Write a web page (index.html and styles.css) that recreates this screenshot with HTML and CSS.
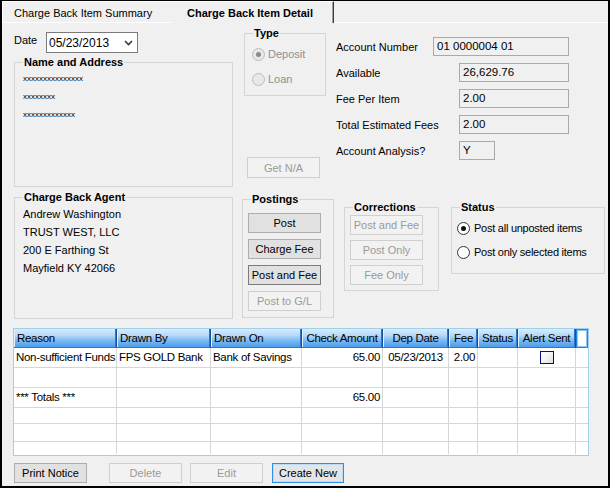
FILE: index.html
```html
<!DOCTYPE html>
<html>
<head>
<meta charset="utf-8">
<link rel="stylesheet" href="styles.css">
</head>
<body>
<div class="window">
  <div class="tabs">
    <div class="tab">Charge Back Item Summary</div>
    <div class="tab active">Charge Back Item Detail</div>
    <div class="tab-fill"></div>
  </div>
  <div class="content">
    <div class="row-top">
      <div class="col-a">
        <div class="date-row">
          <span class="date-lbl">Date</span>
          <div class="combo">
            <span>05/23/2013</span>
            <svg class="chev" width="9" height="6" viewBox="0 0 9 6"><polyline points="1,1 4.5,4.5 8,1" fill="none" stroke="#3a3a3a" stroke-width="1.6"/></svg>
          </div>
        </div>
        <div class="group name-group">
          <span class="group-title">Name and Address</span>
          <div class="masked">xxxxxxxxxxxxxxx</div>
          <div class="masked">xxxxxxxx</div>
          <div class="masked">xxxxxxxxxxxxx</div>
        </div>
      </div>
      <div class="col-b">
        <div class="group type-group">
          <span class="group-title">Type</span>
          <div class="radio-row dis"><span class="radio dis on"></span>Deposit</div>
          <div class="radio-row dis"><span class="radio dis"></span>Loan</div>
        </div>
        <div class="btn disabled getna">Get N/A</div>
      </div>
      <div class="col-c">
        <div class="frow"><span class="lbl short">Account Number</span><div class="field wide">01 0000004 01</div></div>
        <div class="frow"><span class="lbl">Available</span><div class="field">26,629.76</div></div>
        <div class="frow"><span class="lbl">Fee Per Item</span><div class="field">2.00</div></div>
        <div class="frow"><span class="lbl">Total Estimated Fees</span><div class="field">2.00</div></div>
        <div class="frow"><span class="lbl">Account Analysis?</span><div class="field tiny">Y</div></div>
      </div>
    </div>

    <div class="row-mid">
      <div class="group agent-group">
        <span class="group-title">Charge Back Agent</span>
        <div class="aline">Andrew Washington</div>
        <div class="aline">TRUST WEST, LLC</div>
        <div class="aline">200 E Farthing St</div>
        <div class="aline">Mayfield KY 42066</div>
      </div>
      <div class="group postings-group">
        <span class="group-title">Postings</span>
        <div class="btn">Post</div>
        <div class="btn">Charge Fee</div>
        <div class="btn dark">Post and Fee</div>
        <div class="btn disabled">Post to G/L</div>
      </div>
      <div class="group corrections-group">
        <span class="group-title">Corrections</span>
        <div class="btn disabled">Post and Fee</div>
        <div class="btn disabled">Post Only</div>
        <div class="btn disabled">Fee Only</div>
      </div>
      <div class="group status-group">
        <span class="group-title">Status</span>
        <div class="radio-row"><span class="radio on"></span>Post all unposted items</div>
        <div class="radio-row"><span class="radio"></span>Post only selected items</div>
      </div>
    </div>

    <div class="grid">
      <div class="hc">Reason</div>
      <div class="hc">Drawn By</div>
      <div class="hc">Drawn On</div>
      <div class="hc c">Check Amount</div>
      <div class="hc c">Dep Date</div>
      <div class="hc r">Fee</div>
      <div class="hc c">Status</div>
      <div class="hc c">Alert Sent</div>
      <div class="hc blank"></div>

      <div class="cell">Non-sufficient Funds</div>
      <div class="cell">FPS GOLD Bank</div>
      <div class="cell">Bank of Savings</div>
      <div class="cell r">65.00</div>
      <div class="cell c">05/23/2013</div>
      <div class="cell r">2.00</div>
      <div class="cell"></div>
      <div class="cell c"><span class="check"></span></div>
      <div class="cell last"></div>

      <div class="cell"></div><div class="cell"></div><div class="cell"></div><div class="cell"></div><div class="cell"></div><div class="cell"></div><div class="cell"></div><div class="cell"></div><div class="cell last"></div>

      <div class="cell">*** Totals ***</div>
      <div class="cell"></div>
      <div class="cell"></div>
      <div class="cell r">65.00</div>
      <div class="cell"></div><div class="cell"></div><div class="cell"></div><div class="cell"></div><div class="cell last"></div>

      <div class="cell"></div><div class="cell"></div><div class="cell"></div><div class="cell"></div><div class="cell"></div><div class="cell"></div><div class="cell"></div><div class="cell"></div><div class="cell last"></div>

      <div class="cell"></div><div class="cell"></div><div class="cell"></div><div class="cell"></div><div class="cell"></div><div class="cell"></div><div class="cell"></div><div class="cell"></div><div class="cell last"></div>

      <div class="cell end"></div><div class="cell end"></div><div class="cell end"></div><div class="cell end"></div><div class="cell end"></div><div class="cell end"></div><div class="cell end"></div><div class="cell end"></div><div class="cell end last"></div>
    </div>

    <div class="actions">
      <div class="btn">Print Notice</div>
      <div class="btn disabled gap-l">Delete</div>
      <div class="btn disabled">Edit</div>
      <div class="btn focus">Create New</div>
    </div>
  </div>
</div>
</body>
</html>
```

FILE: styles.css
```css
* { box-sizing: border-box; }

body {
  margin: 0;
  background: #f0f0f0;
  font-family: "Liberation Sans", Arial, sans-serif;
  font-size: 11px;
  color: #000;
}

.window {
  width: 610px;
  height: 488px;
  border: 2px solid #000;
  border-top: 1px solid #000;
  background: #f0f0f0;
  overflow: hidden;
}

/* tabs */
.tabs {
  display: flex;
  height: 22px;
}
.tab {
  width: 170px;
  height: 22px;
  padding: 2px 0 0 11px;
  line-height: 18px;
  border-top: 1px solid #fff;
  border-left: 1px solid #fff;
  border-bottom: 1px solid #fff;
  white-space: nowrap;
}
.tab.active {
  width: 162px;
  padding-left: 15px;
  font-weight: bold;
  border-bottom: none;
  border-left: none;
  border-right: 1px solid #3c3c3c;
  box-shadow: inset -1px 0 #a0a0a0;
}
.tab-fill {
  flex: 1;
  border-bottom: 1px solid #fff;
}

.content {
  padding-left: 12px;
}

/* top row */
.row-top {
  display: flex;
  align-items: flex-start;
}
.col-a {
  width: 219px;
  margin-top: 9px;
}
.date-row {
  display: flex;
  align-items: flex-start;
  height: 21px;
}
.date-lbl {
  width: 32px;
  margin-top: 2px;
  line-height: 13px;
}
.combo {
  width: 92px;
  height: 21px;
  border: 1px solid #7a7a7a;
  background: #fff;
  display: flex;
  align-items: center;
  justify-content: space-between;
  padding: 0 4px 0 2px;
  font-size: 12px;
}
.chev { display: block; }

.group {
  position: relative;
  border: 1px solid #d5d5d5;
}
.group-title {
  position: absolute;
  top: -7px;
  left: 8px;
  padding: 0 1px;
  background: #f0f0f0;
  font-weight: bold;
  line-height: 13px;
  white-space: nowrap;
}

.name-group {
  margin-top: 9px;
  height: 125px;
  padding: 7px 0 0 8px;
}
.masked {
  font-size: 8px;
  line-height: 18px;
  height: 18px;
}

.col-b {
  width: 82px;
  margin: 10px 0 0 11px;
}
.type-group {
  height: 63px;
  padding: 14px 0 0 7px;
  display: flex;
  flex-direction: column;
  gap: 12px;
}
.radio-row {
  display: flex;
  align-items: center;
  gap: 3px;
  height: 13px;
  line-height: 13px;
  white-space: nowrap;
}
.radio-row.dis { color: #8f8f8f; }
.radio {
  width: 13px;
  height: 13px;
  flex: none;
  border-radius: 50%;
  border: 1px solid #333;
  background: #fff;
  display: flex;
  align-items: center;
  justify-content: center;
}
.radio.on::after {
  content: "";
  width: 5px;
  height: 5px;
  border-radius: 50%;
  background: #111;
}
.radio.dis {
  border-color: #bcbcbc;
  background: #e8e8e8;
}
.radio.dis.on::after { background: #8a8a8a; }

.btn {
  width: 73px;
  height: 20px;
  border: 1px solid #adadad;
  background: #e1e1e1;
  display: flex;
  align-items: center;
  justify-content: center;
  white-space: nowrap;
}
.btn.dark { border-color: #7c7c7c; }
.btn.disabled {
  border-color: #cfcfcf;
  background: #f2f2f2;
  color: #9a9a9a;
}
.btn.focus {
  border: 1px solid #2e8eea;
  box-shadow: inset 0 0 0 1px #bcdcf8;
  background: #e5e5e5;
  width: 72px;
}
.getna {
  margin: 61px 0 0 3px;
  height: 21px;
}

.col-c {
  margin: 14px 0 0 10px;
  display: flex;
  flex-direction: column;
  gap: 7px;
}
.frow {
  display: flex;
  align-items: center;
  height: 19px;
}
.lbl {
  width: 123px;
  white-space: nowrap;
}
.lbl.short { width: 97px; }
.field {
  width: 110px;
  height: 19px;
  border: 1px solid #a9a9a9;
  background: #f0f0f0;
  padding-left: 3px;
  line-height: 17px;
  font-size: 11.5px;
}
.field.wide { width: 136px; }
.field.tiny { width: 36px; }

/* middle row */
.row-mid {
  display: flex;
  align-items: flex-start;
  margin-top: 10px;
}
.agent-group {
  width: 219px;
  height: 122px;
  padding: 7px 0 0 8px;
}
.aline {
  line-height: 18px;
  height: 18px;
  white-space: nowrap;
}
.postings-group {
  width: 92px;
  height: 119px;
  margin: 2px 0 0 9px;
  padding: 13px 0 0 5px;
  display: flex;
  flex-direction: column;
  gap: 6px;
}
.corrections-group {
  width: 95px;
  height: 84px;
  margin: 10px 0 0 10px;
  padding: 7px 0 0 5px;
  display: flex;
  flex-direction: column;
  gap: 5px;
}
.status-group {
  width: 154px;
  height: 67px;
  margin: 10px 0 0 12px;
  padding: 14px 0 0 5px;
  display: flex;
  flex-direction: column;
  gap: 11px;
}
.status-group .radio-row { gap: 4px; letter-spacing: -0.25px; }

/* data grid */
.grid {
  margin: 9px 0 0 -1px;
  width: 576px;
  height: 128px;
  border: 1px solid #9fd0e8;
  background: #fff;
  display: grid;
  grid-template-columns: 103px 94px 91px 81px 66px 29px 40px 58px 12px;
  grid-template-rows: 19px 20px 20px 20px 16px 18px 12px;
  font-size: 11.5px;
  letter-spacing: -0.3px;
  overflow: hidden;
}
.hc {
  background: linear-gradient(to bottom, #d9ecfd 0%, #b6d9f9 35%, #7ab9f2 65%, #4a9cec 100%);
  border-right: 1px solid #14509e;
  box-shadow: inset -1px 0 #2a77d0, inset 1px 0 #e2f0fe;
  border-bottom: 1px solid #2a77d0;
  padding: 0 3px;
  line-height: 18px;
  white-space: nowrap;
  overflow: hidden;
}
.hc.c { text-align: center; }
.hc.r { text-align: right; padding-right: 4px; }
.hc.blank {
  background: #fff;
  border: 1px solid #1a86ef;
  box-shadow: inset 0 0 0 1px #8cc4f5;
}
.cell {
  border-right: 1px solid #d6d6d6;
  border-bottom: 1px solid #d6d6d6;
  padding: 0 2px;
  line-height: 19px;
  white-space: nowrap;
  overflow: hidden;
}
.cell.r { text-align: right; }
.cell.c { text-align: center; }
.cell.last { border-right: none; }
.cell.end { border-bottom: none; }
.check {
  display: inline-block;
  width: 14px;
  height: 13px;
  margin-top: 3px;
  vertical-align: top;
  border: 1px solid #0a0a80;
  background: linear-gradient(135deg, #ffffff 0%, #f4f4f4 50%, #dcdcdc 100%);
}

/* bottom actions */
.actions {
  display: flex;
  margin-top: 7px;
  gap: 8px;
}
.actions .gap-l { margin-left: 14px; }
.actions .focus { margin-left: 1px; }
```
